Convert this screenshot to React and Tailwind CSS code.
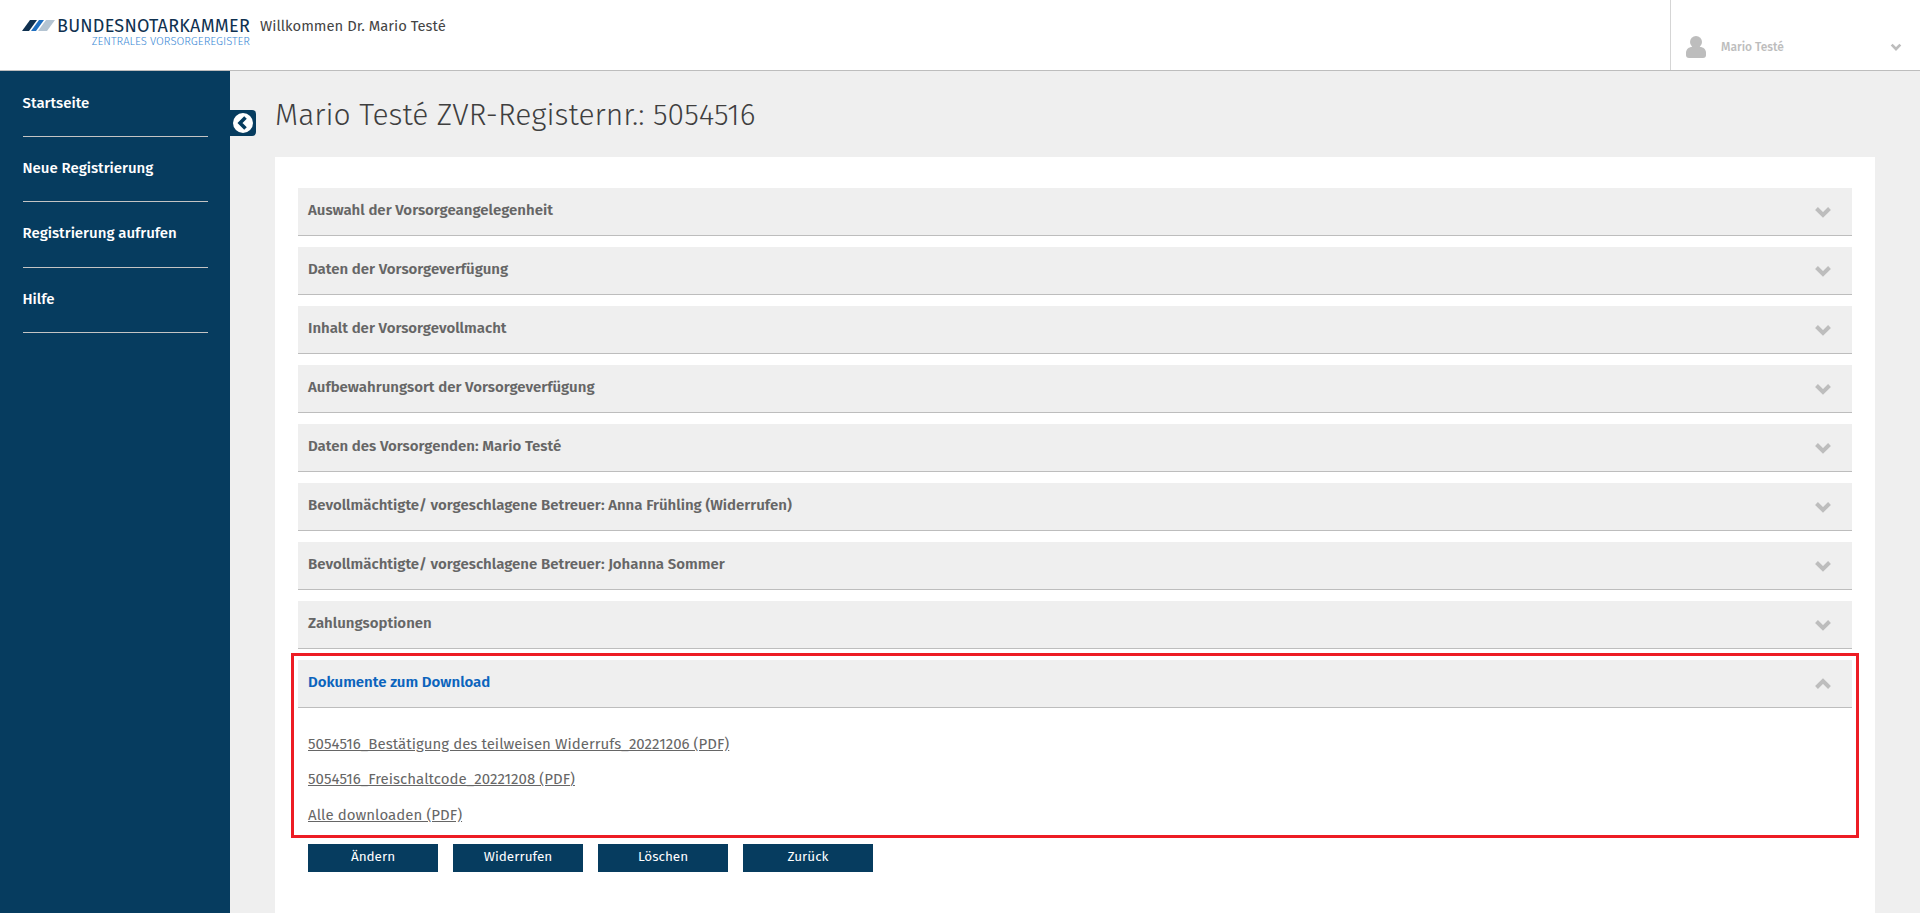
const font = "font-['Fira_Sans','Noto_Sans','Open_Sans',sans-serif]"

const navItems = ['Startseite', 'Neue Registrierung', 'Registrierung aufrufen', 'Hilfe']

const sections = [
  'Auswahl der Vorsorgeangelegenheit',
  'Daten der Vorsorgeverfügung',
  'Inhalt der Vorsorgevollmacht',
  'Aufbewahrungsort der Vorsorgeverfügung',
  'Daten des Vorsorgenden: Mario Testé',
  'Bevollmächtigte/ vorgeschlagene Betreuer: Anna Frühling (Widerrufen)',
  'Bevollmächtigte/ vorgeschlagene Betreuer: Johanna Sommer',
  'Zahlungsoptionen',
]

const links = [
  '5054516_Bestätigung des teilweisen Widerrufs_20221206 (PDF)',
  '5054516_Freischaltcode_20221208 (PDF)',
  'Alle downloaden (PDF)',
]

function Chevron({ up, width = 18, height = 12 }) {
  return (
    <svg width={width} height={height} viewBox="0 0 18 12" className="shrink-0">
      <polyline
        points={up ? '2.5,9.5 9,3 15.5,9.5' : '2.5,2.5 9,9 15.5,2.5'}
        fill="none"
        stroke="#bdbdbd"
        strokeWidth="4"
      />
    </svg>
  )
}

function Logo() {
  return (
    <div className="w-[228px] shrink-0">
      <div className="flex items-center">
        <svg width="33" height="12" viewBox="0 0 33 12" className="mr-[2px] shrink-0">
          <polygon points="0,11 8,0 15,0 7,11" fill="#0f3150" />
          <polygon points="9,11 17,0 22,0 14,11" fill="#1f6fc0" />
          <polygon points="16,11 24,0 33,0 25,11" fill="#b4c4d2" />
        </svg>
        <span className="text-[18px] leading-[20px] tracking-[0.23px] text-[#0f3150] whitespace-nowrap">BUNDESNOTARKAMMER</span>
      </div>
      <div className="text-right text-[11.3px] leading-[13px] -mt-[1px] text-[#3b8ad6] font-light whitespace-nowrap">ZENTRALES VORSORGEREGISTER</div>
    </div>
  )
}

function Header() {
  return (
    <header className="h-[71px] bg-white border-b border-[#bdbdbd] flex">
      <div className="flex-1 flex pl-[22px] pt-[16px]">
        <Logo />
        <span className="ml-[10px] mt-[1px] text-[14.8px] leading-[18px] text-[#444] whitespace-nowrap">Willkommen Dr. Mario Testé</span>
      </div>
      <div className="w-[250px] border-l border-[#d5d5d5] flex items-center pl-[15px] pr-[18px] pt-[24px]">
        <svg width="20" height="22" viewBox="0 0 20 22" className="shrink-0">
          <ellipse cx="10" cy="6" rx="6" ry="6" fill="#bdbdbd" />
          <path d="M0 17c0-4 3-6 6-6h8c3 0 6 2 6 6v2c0 2-1 3-3 3H3c-2 0-3-1-3-3z" fill="#bdbdbd" />
        </svg>
        <span className="ml-[15px] flex-1 text-[12px] font-medium text-[#bdbdbd]">Mario Testé</span>
        <Chevron width={12} height={8} />
      </div>
    </header>
  )
}

function Sidebar() {
  return (
    <aside className="w-[230px] shrink-0 bg-[#063c5f] pt-[1px] px-[23px] relative">
      {navItems.map(item => (
        <div key={item} className="h-[65.2px] w-[185px] border-b border-[#c4c4c4] pt-[21px] text-[15px] leading-[20px] font-medium text-white whitespace-nowrap">
          <span className="-ml-[0.5px]">{item}</span>
        </div>
      ))}
      <div className="absolute left-[230px] top-[39px] w-[26px] h-[26px] bg-[#063c5f] rounded-r-[4px] flex items-center justify-center">
        <div className="w-[20px] h-[20px] rounded-full bg-white flex items-center justify-center">
          <svg width="11" height="14" viewBox="0 0 11 14" className="-ml-[2px]">
            <polyline points="8.5,1.5 3,7 8.5,12.5" fill="none" stroke="#063c5f" strokeWidth="3.6" />
          </svg>
        </div>
      </div>
    </aside>
  )
}

function SectionRow({ title, open }) {
  return (
    <div className="h-[48px] bg-[#efefef] border-b border-[#bdbdbd] flex items-center justify-between pl-[10px] pr-[20px]">
      <span className={`text-[15px] font-semibold whitespace-nowrap pb-[2px] ${open ? 'text-[#0b64bd]' : 'text-[#666]'}`}>{title}</span>
      <Chevron up={open} />
    </div>
  )
}

export default function App() {
  return (
    <div className={`${font} h-[913px] overflow-hidden flex flex-col`}>
      <Header />
      <div className="flex-1 flex min-h-0">
        <Sidebar />
        <main className="flex-1 bg-[#efefef] pl-[45px] pr-[45px] min-w-0">
          <h1 className="h-[86px] pt-[24px] text-[30px] leading-[40px] font-light tracking-[0.03px] text-[#3f3f3f] whitespace-nowrap">Mario Testé ZVR-Registernr.: 5054516</h1>
          <div className="bg-white h-[800px] pt-[31px] px-[23px]">
            <div className="flex flex-col gap-[11px]">
              {sections.map(s => <SectionRow key={s} title={s} />)}
              <div className="relative">
                <SectionRow title="Dokumente zum Download" open />
                <div className="pl-[10px] pt-[26px] flex flex-col">
                  {links.map(l => (
                    <a key={l} className="h-[35.4px] text-[15px] leading-[20px] tracking-[0.04px] text-[#666] underline whitespace-nowrap">{l}</a>
                  ))}
                </div>
                <div className="absolute -left-[7px] -right-[7px] -top-[7px] h-[185px] border-[3px] border-[#ed1c24] pointer-events-none" />
              </div>
            </div>
            <div className="flex gap-[15px] pl-[10px] mt-[3.8px]">
              {['Ändern', 'Widerrufen', 'Löschen', 'Zurück'].map(b => (
                <button key={b} className="w-[130px] h-[28px] bg-[#063c5f] text-white text-[13.5px] leading-[20px] pb-[1px]">{b}</button>
              ))}
            </div>
          </div>
        </main>
      </div>
    </div>
  )
}
